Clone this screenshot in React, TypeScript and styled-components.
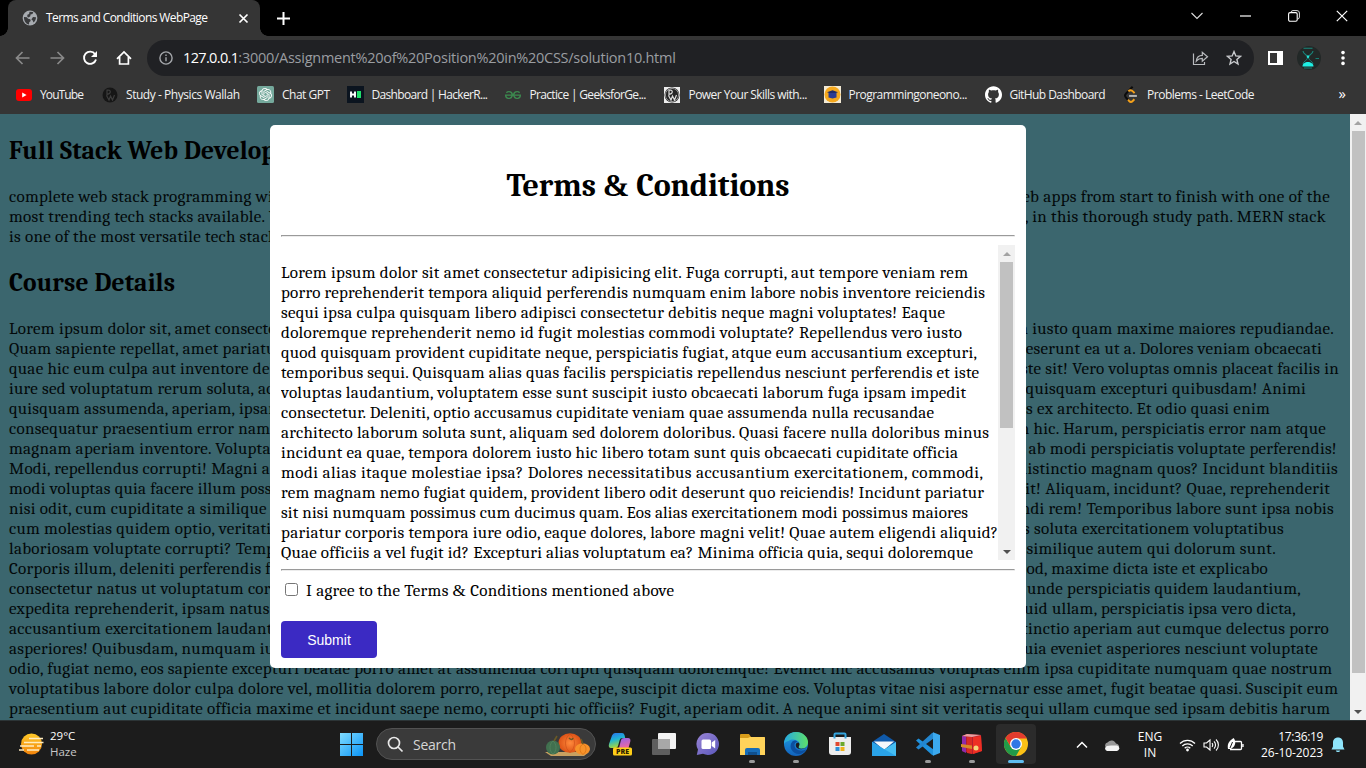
import React, { useLayoutEffect, useRef, useState } from "react";
import styled, { createGlobalStyle } from "styled-components";
import { SiGithub, SiGeeksforgeeks, SiOpenai } from "react-icons/si";

const serif = `"Cambria", "DejaVu Serif Condensed", "DejaVu Serif", serif`;
const ui = `"Segoe UI", "Open Sans", "Noto Sans", sans-serif`;

const GlobalStyle = createGlobalStyle`
  * { box-sizing: border-box; }
  html, body { margin: 0; padding: 0; background: #000; overflow: hidden; }
  svg { display: block; flex: none; }
`;

/* A single line of text whose tracking is adjusted so that it spans a given width. */
const FitBox = styled.span`
  display: inline-block;
  white-space: pre;
  letter-spacing: 0;
`;
const Ampersand = styled.span`
  font-family: "Liberation Serif", "Times New Roman", serif;
  line-height: 1;
`;

function Fit({ w, children }: { w: number; children: string }) {
  const ref = useRef<HTMLSpanElement>(null);
  const [spacing, setSpacing] = useState(0);
  useLayoutEffect(() => {
    if (ref.current) {
      const natural = ref.current.getBoundingClientRect().width;
      setSpacing((w - natural) / (children.length - 1));
    }
  }, [w, children]);
  const [before, after] = children.split("&");
  return (
    <FitBox ref={ref} style={{ letterSpacing: spacing }}>
      {before}
      {after !== undefined && <><Ampersand>&amp;</Ampersand>{after}</>}
    </FitBox>
  );
}

const Desktop = styled.div`
  width: 1366px;
  height: 768px;
  display: flex;
  flex-direction: column;
  overflow: hidden;
  font-family: ${ui};
`;

/* ---------- browser chrome ---------- */
const TabStrip = styled.header`
  height: 36px;
  flex: none;
  background: #000;
  display: flex;
  align-items: flex-end;
  color: #fff;
`;
const TabFoot = styled.div<{ $side: "left" | "right" }>`
  width: 8px;
  height: 8px;
  background: radial-gradient(circle at ${(p) => (p.$side === "left" ? "0 0" : "8px 0")}, #000 7.5px, #353535 8px);
`;
const Tab = styled.div`
  width: 252px;
  height: 36px;
  background: #353535;
  border-radius: 8px 8px 0 0;
  display: flex;
  align-items: center;
  padding: 0 11px 0 14px;
  gap: 8px;
  font-size: 12px;
`;
const TabTitle = styled.div`
  flex: 1;
  line-height: 16px;
`;
const NewTab = styled.div`
  height: 36px;
  display: flex;
  align-items: center;
  padding-left: 9px;
`;
const WindowButtons = styled.div`
  margin-left: auto;
  height: 32px;
  align-self: flex-start;
  display: flex;
  align-items: center;
`;
const WindowButton = styled.div<{ $w: number }>`
  width: ${(p) => p.$w}px;
  display: flex;
  justify-content: center;
`;
const Toolbar = styled.div`
  height: 42px;
  flex: none;
  background: #353535;
  display: flex;
  align-items: center;
  padding: 2px 0 0 14px;
`;
const NavIcons = styled.div`
  display: flex;
  gap: 15.5px;
  width: 133px;
`;
const AddressBar = styled.div`
  width: 1107px;
  height: 36px;
  border-radius: 18px;
  background: #202124;
  display: flex;
  align-items: center;
  padding: 0 12px 0 12px;
  font-size: 14.5px;
  color: #9a9da1;
  b { color: #fff; font-weight: 400; }
`;
const Url = styled.div`
  flex: 1;
  white-space: pre;
  padding: 0 0 2px 10px;
`;
const AddressActions = styled.div`
  display: flex;
  align-items: center;
  gap: 17px;
`;
const ToolbarEnd = styled.div`
  display: flex;
  align-items: center;
  padding-left: 14px;
  gap: 14px;
`;
const MenuSlot = styled.div`
  padding-left: 6px;
`;
const BookmarkBar = styled.nav`
  height: 36px;
  flex: none;
  background: #353535;
  display: flex;
  align-items: center;
  padding: 0 20px 3px 15px;
  font-size: 12px;
  color: #f1f1f1;
`;
const Bookmark = styled.div<{ $w: number }>`
  width: ${(p) => p.$w}px;
  display: flex;
  align-items: center;
  gap: 8px;
  line-height: 18px;
`;
const IconSlot = styled.div`
  width: 17px;
  height: 17px;
  flex: none;
  display: flex;
  align-items: center;
  justify-content: center;
`;
const More = styled.div`
  margin-left: auto;
  font-size: 15px;
  line-height: 18px;
  padding-bottom: 3px;
  color: #fff;
`;

/* ---------- page ---------- */
const Viewport = styled.main`
  height: 606px;
  flex: none;
  display: flex;
  position: relative;
  overflow: hidden;
  background: #3b666e;
  font-family: ${serif};
  font-size: 17px;
  line-height: 20px;
  color: #000;
`;
const Article = styled.article`
  flex: 1;
  padding: 21px 0 0 9px;
  color: #03090a;
  overflow: hidden;
`;
const SectionTitle = styled.h2`
  margin: 0;
  height: 32px;
  line-height: 32px;
  font-size: 25.5px;
  font-weight: 700;
  color: #000;
  white-space: nowrap;
`;
const Paragraph = styled.div`
  margin: 20px 0;
`;
const SplitLine = styled.div<{ $w: number }>`
  width: ${(p) => p.$w}px;
  height: 20px;
  display: flex;
  justify-content: space-between;
  white-space: pre;
  letter-spacing: 0.28px;
`;
const Scrollbar = styled.div<{ $w: number }>`
  width: ${(p) => p.$w}px;
  flex: none;
  background: #f1f1f1;
  display: flex;
  flex-direction: column;
  align-items: center;
`;
const ScrollArrow = styled.div<{ $down?: boolean }>`
  height: 17px;
  display: flex;
  align-items: center;
  margin-top: ${(p) => (p.$down ? "auto" : "0")};
  &::before {
    content: "";
    border: 4px solid transparent;
    ${(p) => (p.$down ? "border-top-color: #505050; border-bottom: 0;" : "border-bottom-color: #a3a3a3; border-top: 0;")}
  }
`;
const Thumb = styled.div<{ $h: number }>`
  width: 13px;
  height: ${(p) => p.$h}px;
  background: #c1c1c1;
`;
const Modal = styled.section`
  position: absolute;
  left: 270px;
  top: 11px;
  width: 756px;
  height: 543px;
  padding: 0 11px;
  border-radius: 5px;
  background: #fff;
`;
const ModalTitle = styled.h1`
  margin: 0;
  padding-top: 41px;
  height: 110px;
  line-height: 40px;
  font-size: 32px;
  text-align: center;
`;
const Rule = styled.div`
  height: 2px;
  border: 1px solid #9a9a9a;
  border-bottom-color: #ececec;
  border-right-color: #ececec;
`;
const Terms = styled.div`
  margin: 8px 0 9px;
  height: 315px;
  display: flex;
  overflow: hidden;
`;
const TermsText = styled.div`
  width: 717px;
  flex: none;
  padding-top: 18px;
`;
const TermsLine = styled.div`
  height: 20px;
  white-space: pre;
`;
const Agree = styled.label`
  display: flex;
  align-items: center;
  height: 20px;
  margin-top: 10px;
  padding-left: 4px;
  gap: 8px;
`;
const Checkbox = styled.input`
  margin: 0 0 4px;
  width: 13px;
  height: 13px;
`;
const Submit = styled.button`
  display: block;
  margin-top: 20px;
  width: 96px;
  height: 37px;
  border: 0;
  border-radius: 4px;
  background: #3b2ac3;
  color: #fff;
  font: 14px "Liberation Sans", Arial, sans-serif;
`;

/* ---------- taskbar ---------- */
const Taskbar = styled.footer`
  height: 48px;
  flex: none;
  background: #1c1c1c;
  border-top: 1px solid #2c3436;
  display: flex;
  align-items: center;
  color: #fff;
  font-size: 12px;
`;
const Weather = styled.div`
  width: 332px;
  display: flex;
  align-items: center;
  gap: 6px;
  padding: 0 0 2px 19px;
  font-size: 11.5px;
  line-height: 16px;
`;
const Muted = styled.div`
  color: #c8c8c8;
`;
const SearchBox = styled.div`
  width: 220px;
  height: 32px;
  margin: 0 2px 1px 5px;
  border: 1px solid #525252;
  border-radius: 16px;
  background: #3a3a3a;
  display: flex;
  align-items: center;
  padding: 0 4px 0 10px;
  gap: 9px;
  font-size: 14px;
  color: #d6d6d6;
`;
const SearchLabel = styled.div`
  flex: 1;
`;
const TaskSlot = styled.div<{ $active?: boolean; $w?: number }>`
  width: ${(p) => p.$w ?? 40}px;
  height: 40px;
  margin: 0 2px 1px;
  border-radius: 4px;
  background: ${(p) => (p.$active ? "#2b2b2b" : "transparent")};
  position: relative;
  display: flex;
  align-items: center;
  justify-content: center;
`;
const Running = styled.i<{ $active?: boolean }>`
  position: absolute;
  bottom: 1px;
  height: 3px;
  border-radius: 2px;
  width: ${(p) => (p.$active ? 16 : 6)}px;
  background: ${(p) => (p.$active ? "#5fbdf0" : "#9a9a9a")};
`;
const Tray = styled.div`
  margin-left: auto;
  padding: 1px 21px 0 0;
  display: flex;
  align-items: center;
`;
const TrayStack = styled.div<{ $align: string; $w: number }>`
  width: ${(p) => p.$w}px;
  text-align: ${(p) => p.$align};
  line-height: 16px;
  font-size: 12px;
`;
const TrayIcons = styled.div`
  display: flex;
  gap: 7px;
  margin: 0 17px 0 16px;
`;

/* ---------- content ---------- */
const intro: [string, string, number][] = [
  ["complete web stack programming with", "web apps from start to finish with one of the", 1330],
  ["most trending tech stacks available. You", "here, in this thorough study path. MERN stack", 1326],
  ["is one of the most versatile tech stacks.", "", 1000],
];
const details: [string, string, number][] = [
  ["Lorem ipsum dolor sit, amet consectetur", "ea iusto quam maxime maiores repudiandae.", 1334],
  ["Quam sapiente repellat, amet pariatur", "deserunt ea ut a. Dolores veniam obcaecati", 1322],
  ["quae hic eum culpa aut inventore debitis", "iste sit! Vero voluptas omnis placeat facilis in", 1339],
  ["iure sed voluptatum rerum soluta, accu", "quisquam excepturi quibusdam! Animi", 1306],
  ["quisquam assumenda, aperiam, ipsam", "eos ex architecto. Et odio quasi enim", 1270],
  ["consequatur praesentium error nam", "rem hic. Harum, perspiciatis error nam atque", 1326],
  ["magnam aperiam inventore. Voluptate", "ab modi perspiciatis voluptate perferendis!", 1337],
  ["Modi, repellendus corrupti! Magni aut", "distinctio magnam quos? Incidunt blanditiis", 1338],
  ["modi voluptas quia facere illum possimus", "elit! Aliquam, incidunt? Quae, reprehenderit", 1330],
  ["nisi odit, cum cupiditate a similique", "eligendi rem! Temporibus labore sunt ipsa nobis", 1334],
  ["cum molestias quidem optio, veritatis", "eos soluta exercitationem voluptatibus", 1284],
  ["laboriosam voluptate corrupti? Tempora", "similique autem qui dolorum sunt.", 1276],
  ["Corporis illum, deleniti perferendis fuga", "quod, maxime dicta iste et explicabo", 1268],
  ["consectetur natus ut voluptatum corrupti", "unde perspiciatis quidem laudantium,", 1301],
  ["expedita reprehenderit, ipsam natus", "aliquid ullam, perspiciatis ipsa vero dicta,", 1296],
  ["accusantium exercitationem laudantium", "distinctio aperiam aut cumque delectus porro", 1329],
  ["asperiores! Quibusdam, numquam iusto", "quia eveniet asperiores nesciunt voluptate", 1318],
];
const closing: [string, number][] = [
  ["odio, fugiat nemo, eos sapiente excepturi beatae porro amet at assumenda corrupti quisquam doloremque! Eveniet hic accusamus voluptas enim ipsa cupiditate numquam quae nostrum", 1332],
  ["voluptatibus labore dolor culpa dolore vel, mollitia dolorem porro, repellat aut saepe, suscipit dicta maxime eos. Voluptas vitae nisi aspernatur esse amet, fugit beatae quasi. Suscipit eum", 1338],
  ["praesentium aut cupiditate officia maxime et incidunt saepe nemo, corrupti hic officiis? Fugit, aperiam odit. A neque animi sint sit veritatis sequi ullam cumque sed ipsam debitis harum", 1330],
];
const terms: [string, number][] = [
  ["Lorem ipsum dolor sit amet consectetur adipisicing elit. Fuga corrupti, aut tempore veniam rem", 968],
  ["porro reprehenderit tempora aliquid perferendis numquam enim labore nobis inventore reiciendis", 985],
  ["sequi ipsa culpa quisquam libero adipisci consectetur debitis neque magni voluptates! Eaque", 945],
  ["doloremque reprehenderit nemo id fugit molestias commodi voluptate? Repellendus vero iusto", 962],
  ["quod quisquam provident cupiditate neque, perspiciatis fugiat, atque eum accusantium excepturi,", 977],
  ["temporibus sequi. Quisquam alias quas facilis perspiciatis repellendus nesciunt perferendis et iste", 979],
  ["voluptas laudantium, voluptatem esse sunt suscipit iusto obcaecati laborum fuga ipsam impedit", 966],
  ["consectetur. Deleniti, optio accusamus cupiditate veniam quae assumenda nulla recusandae", 934],
  ["architecto laborum soluta sunt, aliquam sed dolorem doloribus. Quasi facere nulla doloribus minus", 989],
  ["incidunt ea quae, tempora dolorem iusto hic libero totam sunt quis obcaecati cupiditate officia", 958],
  ["modi alias itaque molestiae ipsa? Dolores necessitatibus accusantium exercitationem, commodi,", 983],
  ["rem magnam nemo fugiat quidem, provident libero odit deserunt quo reiciendis! Incidunt pariatur", 984],
  ["sit nisi numquam possimus cum ducimus quam. Eos alias exercitationem modi possimus maiores", 968],
  ["pariatur corporis tempora iure odio, eaque dolores, labore magni velit! Quae autem eligendi aliquid?", 998],
  ["Quae officiis a vel fugit id? Excepturi alias voluptatum ea? Minima officia quia, sequi doloremque", 973],
];

/* ---------- icons ---------- */
const stroke = (c: string, w = 1.6) => ({ fill: "none", stroke: c, strokeWidth: w });

const Globe = () => (
  <svg width="16" height="16" viewBox="0 0 16 16">
    <circle cx="8" cy="8" r="7.4" fill="#a7abb0" />
    <path d="M2 7l3 .3 1 1.5 2.3.5.4 1.8-1.5 1.2-.2 2.2C4 14 1.8 11 2 7zM7.5 1.8l3.8.3-.8 2-2 .5-.2 1.6-1.7 1.2-1.4-.8.2-1.8 1.7-.7zM11 7l3 .2c0 2.3-1 4-2.5 5.2l-.8-1.8-1.3-1.2z" fill="#393a3c" />
  </svg>
);
const YouTube = () => (
  <svg width="16" height="12" viewBox="0 0 16 12"><rect width="16" height="12" rx="3" fill="#f00" /><path d="M6.2 3.4v5.2L10.6 6z" fill="#fff" /></svg>
);
const PwGlyph = ({ light }: { light?: boolean }) => (
  <svg width="16" height="16" viewBox="0 0 16 16">
    {light && <rect width="16" height="16" fill="#eee" />}
    <circle cx="8" cy="8" r="7.5" fill={light ? "#262626" : "#161616"} />
    <g {...stroke(light ? "#ddd" : "#3d3d3d", 1.2)}>
      {light && <circle cx="8" cy="8" r="6.6" strokeWidth=".6" />}
      <path d="M5 8.500V3.200c4-1 4.500 3.600.500 4M4.500 8.500L7 13l1.500-4 2 4L12.500 8" />
    </g>
  </svg>
);
const ChatGpt = () => (
  <svg width="17" height="17" viewBox="0 0 17 17"><rect width="17" height="17" rx="1.5" fill="#75a99c" /><g transform="translate(2 2)" color="#fff"><SiOpenai size={13} /></g></svg>
);
const HackerRank = () => (
  <svg width="17" height="17" viewBox="0 0 17 17"><rect width="17" height="17" fill="#0b141f" /><path d="M4 5.5v6M8 5.5v6M4 8.5h4" {...stroke("#fff", 1.9)} /><rect x="10" y="5" width="4" height="7" fill="#1fe06a" /></svg>
);
const Owl = () => (
  <svg width="17" height="17" viewBox="0 0 17 17"><rect width="17" height="17" fill="#f3ead5" /><circle cx="8.5" cy="8.5" r="8" fill="#f5a81d" /><path d="M3 6.200l5.500-2 5.500 2-5.500 2z" fill="#1f2b6b" /><path d="M4.500 7h8v4.500l-4 1-4-1z" fill="#2c3c94" /></svg>
);
const LeetCode = () => (
  <svg width="17" height="17" viewBox="0 0 24 24" fill="none" strokeWidth="2.8">
    <path d="M15 1L5.500 11c-1.600 1.700-1.600 3.600 0 5.200l4 4.300" stroke="#0c0c0c" />
    <path d="M8.500 19.300l1.500 1.800c1.500 1.500 3.600 1.500 5.100 0l2.400-2.400M9 7.500c2-2.200 4.600-2 6.400 0l2.400 2.500" stroke="#f5a11b" />
    <path d="M10 14h11" stroke="#b7b7b7" />
  </svg>
);
const Arrow = ({ flip }: { flip?: boolean }) => (
  <svg width="18" height="18" viewBox="0 0 18 18"><path d={flip ? "M2.5 9h12M9.5 3l6 6-6 6" : "M15.5 9h-12M8.5 3l-6 6 6 6"} {...stroke("#8a8a8a", 1.7)} /></svg>
);
const Reload = () => (
  <svg width="18" height="18" viewBox="0 0 18 18"><path d="M14.100 5.200A6.100 6.100 0 1 0 15 10.500" {...stroke("#fff", 1.900)} /><path d="M16 2v6h-6z" fill="#fff" /></svg>
);
const Home = () => (
  <svg width="18" height="18" viewBox="0 0 18 18"><path d="M2 9.800L9 3l7 6.800M4.600 8V15h8.800V8" {...stroke("#fff", 1.700)} /></svg>
);
const Info = () => (
  <svg width="14" height="14" viewBox="0 0 14 14"><circle cx="7" cy="7" r="6.1" {...stroke("#a4a7ab", 1.4)} /><path d="M7 6.2v4M7 3.5v1.4" {...stroke("#a4a7ab", 1.4)} /></svg>
);
const Share = () => (
  <svg width="17" height="16" viewBox="0 0 17 16"><path d="M1.500 3.500v11h11v-2.500M4.300 11c.5-4 2.800-5.600 6-5.600V2.300l5.200 4.500-5.200 4.400V8.300c-2.700 0-4.300.7-6 2.700z" {...stroke("#b9bbbe", 1.2)} /></svg>
);
const Star = () => (
  <svg width="16" height="16" viewBox="0 0 16 16"><path d="M8 1.6l1.8 4.3 4.7.4-3.6 3.1 1.1 4.6L8 11.5 4 14l1.1-4.6-3.6-3.1 4.7-.4z" {...stroke("#c9cbce", 1.4)} /></svg>
);
const SidePanel = () => (
  <svg width="15" height="14" viewBox="0 0 15 14"><path d="M0 0h15v14H0zM2 2v10h7V2z" fill="#fff" fillRule="evenodd" /></svg>
);
const Avatar = () => (
  <svg width="24" height="24" viewBox="0 0 24 24">
    <circle cx="12" cy="12" r="12" fill="#222827" />
    <path d="M6.5 2.2h9M6 5c0 3 3.500 4 5 5.500 1.500-1.500 5-2.500 5-5.500" {...stroke("#18867c", 1.1)} />
    <circle cx="11" cy="10.800" r="1.300" fill="#24e8dc" />
    <path d="M10.500 12c0 2-4 3-4.500 6M11.500 12c0 2 4 3 4.500 6" {...stroke("#18867c", .9)} />
    <path d="M5.500 20.500c-.2-6 11-6 11 0z" fill="#1ef0e4" /><path d="M7 22h8M18.500 12.500h3.500" {...stroke("#177c73", 1.2)} />
  </svg>
);
const Dots = () => (
  <svg width="4" height="16" viewBox="0 0 4 16" fill="#fff"><circle cx="2" cy="2.600" r="1.800" /><circle cx="2" cy="8" r="1.800" /><circle cx="2" cy="13.400" r="1.800" /></svg>
);

const Sun = () => (
  <svg width="25" height="24" viewBox="0 0 25 24">
    <defs><linearGradient id="sun" x2="0" y2="1"><stop stopColor="#ffc928" /><stop offset="1" stopColor="#f2840c" /></linearGradient></defs>
    <circle cx="12.500" cy="12" r="10.500" fill="url(#sun)" />
    <path d="M10 6.500h14M5 10.500h19.500M1 14h14M18 14h4M0 18h5M8 18h12" stroke="#ffecc0" strokeWidth="1.600" />
  </svg>
);
const Windows = () => (
  <svg width="23" height="23" viewBox="0 0 23 23">
    <defs><linearGradient id="win" x2="1" y2="1"><stop stopColor="#80dcff" /><stop offset="1" stopColor="#0a94f7" /></linearGradient></defs>
    <path d="M0 0h11v11H0zM12 0h11v11H12zM0 12h11v11H0zM12 12h11v11H12z" fill="url(#win)" />
  </svg>
);
const Pumpkins = () => (
  <svg width="46" height="25" viewBox="0 0 46 25">
    <defs><radialGradient id="pump"><stop stopColor="#ff8a3c" /><stop offset="1" stopColor="#dc5216" /></radialGradient></defs>
    <path d="M0 20h44l-5 4H6z" fill="#c8a060" />
    <ellipse cx="25" cy="11" rx="11.500" ry="9.800" fill="url(#pump)" />
    <path d="M25 2c-6 4-6 14 0 18.500M25 2c6 4 6 14 0 18.500" {...stroke("#cf5018", .7)} />
    <ellipse cx="8" cy="15.500" rx="7" ry="7" fill="#41704f" /><path d="M8 9c-4 3-4 10 0 13M8 9c4 3 4 10 0 13" {...stroke("#568560", .7)} />
    <ellipse cx="37.500" cy="17" rx="7.500" ry="5.700" fill="#f7922a" /><path d="M38 12c-4 2-4 8 0 10.500M38 12c4 2 4 8 0 10.500" {...stroke("#d36f12", .7)} />
    <path d="M24 6q3 3 4 0M9 9l3-5M38 12l-2-5" {...stroke("#6a5a26", 1.600)} />
  </svg>
);
const Copilot = () => (
  <svg width="24" height="24" viewBox="0 0 24 24">
    <defs>
      <linearGradient id="cpa" x2=".3" y2="1"><stop stopColor="#2a6ff0" /><stop offset=".5" stopColor="#1fb4d2" /><stop offset="1" stopColor="#a6d63c" /></linearGradient>
      <linearGradient id="cpb" x2=".3" y2="1"><stop stopColor="#8d62ee" /><stop offset="1" stopColor="#f5689a" /></linearGradient>
    </defs>
    <path d="M7 1h7q2 0 2.500 2l.700 3h-3q-2 0-2.500 2L10 14q-.5 2-2.500 2H3q-3 0-2-4L4 3.500Q5 1 7 1z" fill="url(#cpa)" />
    <path d="M16 6h4q3 0 2.300 3.500L20.500 16q-.5 2-2.500 2H9l2-2 2-8Q13.500 6 16 6z" fill="url(#cpb)" />
    <rect x="5" y="15.500" width="19" height="8" rx="1.500" fill="#ffce18" />
    <text x="14.500" y="22" textAnchor="middle" fontFamily="Open Sans" fontSize="7" fontWeight="800" fill="#2c2200">PRE</text>
  </svg>
);
const TaskView = () => (
  <svg width="24" height="22" viewBox="0 0 24 22"><rect x="6" width="18" height="16" rx="1" fill="#f3f3f3" /><rect y="6" width="18" height="16" rx="1" fill="#5f5f5f" /><path d="M6 6h12v10H6z" fill="#a8a8a8" /></svg>
);
const Chat = () => (
  <svg width="24" height="24" viewBox="0 0 24 24">
    <defs><linearGradient id="chat" x2="1" y2="1"><stop stopColor="#9a85d6" /><stop offset="1" stopColor="#5a57ba" /></linearGradient></defs>
    <path d="M12 1a11 11 0 1 1-5 20.800L.800 23 2 17.500A11 11 0 0 1 12 1z" fill="url(#chat)" /><rect x="5.500" y="7.500" width="9.500" height="9.500" rx="1.500" fill="#fff" /><path d="M15.700 10.500l3.500-2.500v8.500l-3.500-2.500z" fill="#fff" /></svg>
);
const Explorer = () => (
  <svg width="25" height="23" viewBox="0 0 25 23"><path d="M0 2q0-1 1-1h8l2 3h13q1 0 1 1v6H0z" fill="#d89c1a" /><path d="M0 5h8l2-1h14q1 0 1 1v17H0z" fill="#ffd35a" /><path d="M5 22v-5q0-2 2-2h11q2 0 2 2v5z" fill="#176db8" /><path d="M8 19h9v3H8z" fill="#104f8c" /></svg>
);
const Edge = () => (
  <svg width="24" height="24" viewBox="0 0 24 24">
    <defs>
      <linearGradient id="edge" x2="1"><stop stopColor="#25a8e3" /><stop offset="1" stopColor="#5ee069" /></linearGradient>
      <linearGradient id="edgeb" x2="0" y2="1"><stop stopColor="#1fa0e4" /><stop offset="1" stopColor="#1263bd" /></linearGradient>
    </defs>
    <circle cx="12" cy="12" r="12" fill="url(#edgeb)" />
    <path d="M8 10c-4 5 1 13 8 12 3-.5 5.500-2.500 6.500-5-4 3-12 2-12-4 0-2 1.500-3 3-3-1-2-4-2-5.500 0z" fill="#0c4fa0" />
    <path d="M0 12C0 5 5 0 12 0s12 5 12 10-4 7-7.500 6.500c-2-.2-2.600-1.200-1.500-2.500 3-4-5-9-10.500-5C2 9.500.5 11 0 12z" fill="url(#edge)" />
    <path d="M15 14c-1 1.600 0 2.600 2 2.700 2.500.2 4.500-.5 5.800-1.700-1.800 2.600-9.300 3.500-10.800-.5-.8-2.500.5-4 2.500-4 1 .7 1.300 2.200.5 3.500z" fill="#1c1c1c" />
  </svg>
);
const Store = () => (
  <svg width="24" height="24" viewBox="0 0 24 24"><path d="M1 5h22v15q0 3-3 3H4q-3 0-3-3z" fill="#ededed" /><path d="M6.500 6.500v-4q0-1 1-1h9q1 0 1 1v4" {...stroke("#35a5df", 2)} /><path d="M7.500 10h4v4h-4z" fill="#e0482f" /><path d="M12.500 10h4v4h-4z" fill="#6ba82b" /><path d="M7.500 15h4v4h-4z" fill="#2b8fd6" /><path d="M12.500 15h4v4h-4z" fill="#f0b21b" /></svg>
);
const Mail = () => (
  <svg width="24" height="23" viewBox="0 0 24 23"><path d="M0 9L12 1l12 8v5H0z" fill="#0f59a9" /><path d="M2 8.500h20L12 17z" fill="#f5f8fb" /><path d="M0 9l12 7.500L24 9v14H0z" fill="#45bdf2" /><path d="M0 9l24 14H0z" fill="#2aa3e8" /></svg>
);
const VsCode = () => (
  <svg width="24" height="24" viewBox="0 0 24 24"><path d="M0 8.500L2.500 6.500 17.500 17.500v6L16 23z" fill="#1f91dc" /><path d="M0 15.500l2.500 2L17.500 6.500v-6L16 1z" fill="#2386cf" /><path d="M17 .300L24 3v18l-7 2.700z" fill="#3ba9ee" /></svg>
);
const WinRar = () => (
  <svg width="22" height="22" viewBox="0 0 22 22"><path d="M1 3l5-2 14 1 1 16-9 3-11-3z" fill="#b51e2e" /><path d="M1 3l4 .5V20l-4-2z" fill="#8e2bab" /><path d="M6 4h5v17l-5-1z" fill="#d92a25" /><path d="M12 4l8-1 1 15-9 3z" fill="#ee2f23" /><path d="M0 11l11 1.500v3.500L0 14z" fill="#d88a26" /><path d="M1 3l5-2 14 1-9 2z" fill="#e9a0a0" /><circle cx="15" cy="15" r="2.500" fill="#f6d47b" /></svg>
);
const Chrome = () => (
  <svg width="24" height="24" viewBox="0 0 24 24">
    <circle cx="12" cy="12" r="12" fill="#fbc116" />
    <path d="M1.600 6A12 12 0 0 0 12 24l5.200-9H12L6.800 15z" fill="#229b49" />
    <path d="M12 6.500h10.700A12 12 0 0 0 1.600 6L7 15z" fill="#e33b2e" />
    <circle cx="12" cy="12" r="6" fill="#fff" /><circle cx="12" cy="12" r="4.700" fill="#3077e6" />
  </svg>
);
const TrayChevron = () => (
  <svg width="12" height="8" viewBox="0 0 12 8"><path d="M1 6.500l5-5 5 5" {...stroke("#fff", 1.500)} /></svg>
);
const Cloud = () => (
  <svg width="16" height="11" viewBox="0 0 16 11"><path d="M2.500 8a3 3 0 0 1 1-5.500A5 5 0 0 1 12 3.500 3.500 3.500 0 0 1 15 8z" fill="#989898" /><path d="M3 11a2.600 2.600 0 0 1 0-5l4-.5L13 5.500A2.800 2.800 0 0 1 13 11z" fill="#f4f4f4" /></svg>
);
const Wifi = () => (
  <svg width="17" height="16" viewBox="0 0 17 16"><g {...stroke("#fff", 1.300)}><path d="M1 6.500a10.500 10.500 0 0 1 15 0M3.300 9a7.300 7.300 0 0 1 10.400 0M5.700 11.300a4 4 0 0 1 5.600 0" /></g><circle cx="8.500" cy="13" r="1.400" fill="#fff" /></svg>
);
const Speaker = () => (
  <svg width="17" height="16" viewBox="0 0 17 16"><path d="M1 6h2.500L7 3v10L3.500 10H1zM9 6.200c1 1 1 2.600 0 3.600M11 4.300c2 2 2 5.400 0 7.400M13 2.500c3.200 3 3.200 8 0 11" {...stroke("#fff", 1.100)} /></svg>
);
const Battery = () => (
  <svg width="17" height="16" viewBox="0 0 17 16"><path d="M8 4.500h5.500q1 0 1 1v6q0 1-1 1H3M16 7v3" {...stroke("#fff", 1.300)} /><path d="M6.500 1C9 4 8.500 7 7 9.500L4 12H1C0 7 2 4 6.500 1z" fill="#fff" /><path d="M5.500 5L3 11" stroke="#1c1c1c" /></svg>
);
const Bell = () => (
  <svg width="14" height="16" viewBox="0 0 14 16"><path d="M7 .5c3.200 0 5 2.300 5 5v4l1.500 3H.5L2 9.500v-4c0-2.700 1.800-5 5-5z" fill="#8fe4fb" /><path d="M4.800 13.500h4.400c-.5 2-3.900 2-4.400 0z" fill="#8fe4fb" /></svg>
);

const bookmarks: [number, React.ReactNode, string, number][] = [
  [86, <YouTube />, "YouTube", 44],
  [156, <PwGlyph />, "Study - Physics Wallah", 114],
  [89.500, <ChatGpt />, "Chat GPT", 48],
  [158, <HackerRank />, "Dashboard | HackerR...", 116.500],
  [159, <SiGeeksforgeeks size={16} color="#3c8a4f" />, "Practice | GeeksforGe...", 117],
  [160, <PwGlyph light />, "Power Your Skills with...", 119],
  [161, <Owl />, "Programmingoneono...", 119],
  [137.500, <SiGithub size={17} color="#fff" />, "GitHub Dashboard", 96],
  [140, <LeetCode />, "Problems - LeetCode", 107.500],
];

const apps: [React.ReactNode, boolean?, boolean?][] = [
  [<Copilot />], [<TaskView />], [<Chat />], [<Explorer />, true], [<Edge />, true], [<Store />],
  [<Mail />], [<VsCode />, true], [<WinRar />, true], [<Chrome />, true, true],
];

export default function App() {
  return (
    <Desktop>
      <GlobalStyle />
      <TabStrip>
        <TabFoot $side="left" />
        <Tab>
          <Globe />
          <TabTitle><Fit w={162}>Terms and Conditions WebPage</Fit></TabTitle>
          <svg width="11" height="11" viewBox="0 0 11 11"><path d="M1.500 1.500l8 8M9.500 1.500l-8 8" {...stroke("#fff", 1.700)} /></svg>
        </Tab>
        <TabFoot $side="right" />
        <NewTab><svg width="13" height="13" viewBox="0 0 13 13"><path d="M6.500 0v13M0 6.500h13" {...stroke("#fff", 2)} /></svg></NewTab>
        <WindowButtons>
          <WindowButton $w={48}><svg width="12" height="8" viewBox="0 0 12 8"><path d="M.5 1L6 6.500 11.500 1" {...stroke("#ddd", 1.100)} /></svg></WindowButton>
          <WindowButton $w={48}><svg width="11" height="2" viewBox="0 0 11 2"><path d="M0 1h11" {...stroke("#fff", 1.200)} /></svg></WindowButton>
          <WindowButton $w={49}><svg width="12" height="12" viewBox="0 0 12 12"><rect x=".6" y="2.600" width="8.600" height="8.600" rx="1.500" {...stroke("#fff", 1.100)} /><path d="M3 2.500Q3 .6 5 .6h4q2.400 0 2.400 2.400v4q0 2-1.900 2" {...stroke("#ddd", 1)} /></svg></WindowButton>
          <WindowButton $w={48}><svg width="12" height="12" viewBox="0 0 12 12"><path d="M.8.800l10.400 10.400M11.200.800L.800 11.200" {...stroke("#fff", 1.200)} /></svg></WindowButton>
        </WindowButtons>
      </TabStrip>
      <Toolbar>
        <NavIcons><Arrow /><Arrow flip /><Reload /><Home /></NavIcons>
        <AddressBar>
          <Info />
          <Url><b><Fit w={56}>127.0.0.1</Fit></b><Fit w={437.5}>:3000/Assignment%20of%20Position%20in%20CSS/solution10.html</Fit></Url>
          <AddressActions><Share /><Star /></AddressActions>
        </AddressBar>
        <ToolbarEnd><SidePanel /><Avatar /><MenuSlot><Dots /></MenuSlot></ToolbarEnd>
      </Toolbar>
      <BookmarkBar>
        {bookmarks.map(([w, icon, label, lw]) => (
          <Bookmark key={label} $w={w}><IconSlot>{icon}</IconSlot><Fit w={lw}>{label}</Fit></Bookmark>
        ))}
        <More>»</More>
      </BookmarkBar>

      <Viewport>
        <Article>
          <SectionTitle><Fit w={267}>Full Stack Web Develop</Fit></SectionTitle>
          <Paragraph>
            {intro.map(([a, b, end]) => <SplitLine key={a} $w={end - 9}><span>{a}</span><span>{b}</span></SplitLine>)}
          </Paragraph>
          <SectionTitle><Fit w={166}>Course Details</Fit></SectionTitle>
          <Paragraph>
            {details.map(([a, b, end]) => <SplitLine key={a} $w={end - 9}><span>{a}</span><span>{b}</span></SplitLine>)}
            {closing.map(([a, end]) => <SplitLine key={a} $w={end - 9}><Fit w={end - 9}>{a}</Fit></SplitLine>)}
          </Paragraph>
        </Article>
        <Scrollbar $w={16}><ScrollArrow /><Thumb $h={542} /><ScrollArrow $down /></Scrollbar>
        <Modal>
          <ModalTitle><Fit w={283}>Terms &amp; Conditions</Fit></ModalTitle>
          <Rule />
          <Terms>
            <TermsText>
              {terms.map(([line, end]) => <TermsLine key={line}><Fit w={end - 281}>{line}</Fit></TermsLine>)}
            </TermsText>
            <Scrollbar $w={17}><ScrollArrow /><Thumb $h={166} /><ScrollArrow $down /></Scrollbar>
          </Terms>
          <Rule />
          <Agree><Checkbox type="checkbox" /><Fit w={368}>I agree to the Terms &amp; Conditions mentioned above</Fit></Agree>
          <Submit>Submit</Submit>
        </Modal>
      </Viewport>

      <Taskbar>
        <Weather><Sun /><div><div>29°C</div><Muted>Haze</Muted></div></Weather>
        <TaskSlot $w={35}><Windows /></TaskSlot>
        <SearchBox>
          <svg width="17" height="17" viewBox="0 0 17 17"><circle cx="7" cy="7" r="5.500" {...stroke("#e8e8e8", 1.700)} /><path d="M11 11l4.500 4.500" {...stroke("#e8e8e8", 1.700)} /></svg>
          <SearchLabel><Fit w={43}>Search</Fit></SearchLabel>
          <Pumpkins />
        </SearchBox>
        {apps.map(([icon, running, active], i) => (
          <TaskSlot key={i} $active={active}>{icon}{running && <Running $active={active} />}</TaskSlot>
        ))}
        <Tray>
          <TrayChevron />
          <TrayIcons><Cloud /></TrayIcons>
          <TrayStack $align="center" $w={26}><div>ENG</div><div>IN</div></TrayStack>
          <TrayIcons><Wifi /><Speaker /><Battery /></TrayIcons>
          <TrayStack $align="right" $w={62}><Fit w={45}>17:36:19</Fit><Fit w={62}>26-10-2023</Fit></TrayStack>
          <TrayStack $align="right" $w={22}><svg width="22" height="16"><g transform="translate(8)"><Bell /></g></svg></TrayStack>
        </Tray>
      </Taskbar>
    </Desktop>
  );
}
